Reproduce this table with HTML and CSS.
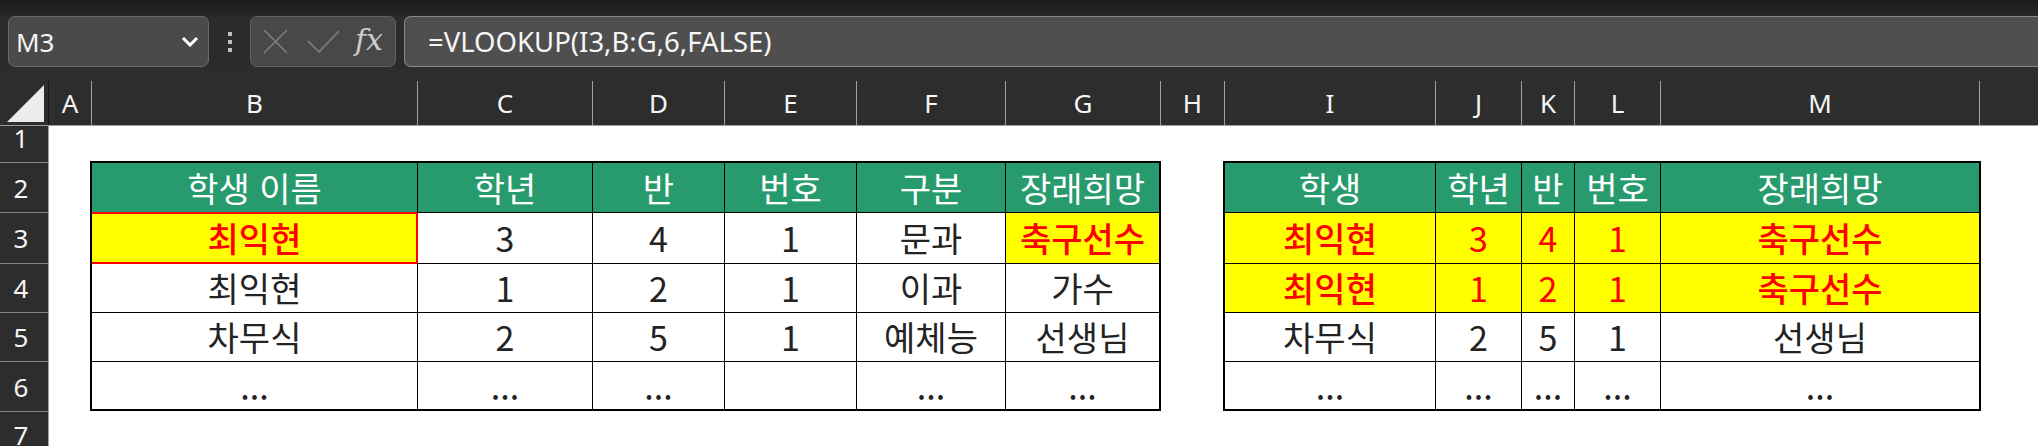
FILE: index.html
```html
<!DOCTYPE html>
<html lang="ko">
<head>
<meta charset="utf-8">
<title>VLOOKUP</title>
<link rel="stylesheet" href="styles.css">
</head>
<body>
<div class="app">
  <div class="topstrip"></div>
  <div class="fbar">
    <div class="namebox">
      <span class="ref">M3</span>
      <svg class="chev" width="18" height="11" viewBox="0 0 18 11"><path d="M2 2 L9 9 L16 2" fill="none" stroke="#ffffff" stroke-width="3"/></svg>
    </div>
    <div class="grip"><i></i><i></i><i></i></div>
    <div class="fxbox">
      <svg class="ico-x" width="25" height="25" viewBox="0 0 25 25"><path d="M1 1 L24 24 M24 1 L1 24" stroke="#7e7e7e" stroke-width="1.7" fill="none"/></svg>
      <svg class="ico-check" width="33" height="23" viewBox="0 0 33 23"><path d="M1 11 L12 22 L32 1" stroke="#7e7e7e" stroke-width="1.7" fill="none"/></svg>
      <span class="fx">fx</span>
    </div>
    <div class="formula">=VLOOKUP(I3,B:G,6,FALSE)</div>
  </div>
  <div class="colhead">
    <div class="corner"><svg width="38" height="38" viewBox="0 0 38 38"><path d="M0 37 L37 37 L37 0 Z" fill="#ececec"/></svg></div>
    <div class="col first">A</div>
    <div class="col">B</div>
    <div class="col">C</div>
    <div class="col">D</div>
    <div class="col">E</div>
    <div class="col">F</div>
    <div class="col">G</div>
    <div class="col">H</div>
    <div class="col">I</div>
    <div class="col">J</div>
    <div class="col">K</div>
    <div class="col">L</div>
    <div class="col">M</div>
    <div class="col"></div>
  </div>
  <div class="sheet">
    <div class="rowhead">
      <div class="rn r1">1</div>
      <div class="rn r2">2</div>
      <div class="rn r3">3</div>
      <div class="rn r4">4</div>
      <div class="rn r5">5</div>
      <div class="rn r6">6</div>
      <div class="rn r7">7</div>
    </div>
    <div class="cells">
      <div class="tbl t1">
        <div class="c h">학생 이름</div><div class="c h">학년</div><div class="c h">반</div><div class="c h">번호</div><div class="c h">구분</div><div class="c h">장래희망</div>
        <div class="c y k sel">최익현</div><div class="c">3</div><div class="c">4</div><div class="c">1</div><div class="c">문과</div><div class="c y k">축구선수</div>
        <div class="c">최익현</div><div class="c">1</div><div class="c">2</div><div class="c">1</div><div class="c">이과</div><div class="c">가수</div>
        <div class="c">차무식</div><div class="c">2</div><div class="c">5</div><div class="c">1</div><div class="c">예체능</div><div class="c">선생님</div>
        <div class="c">...</div><div class="c">...</div><div class="c">...</div><div class="c"></div><div class="c">...</div><div class="c">...</div>
      </div>
      <div class="tbl t2">
        <div class="c h">학생</div><div class="c h">학년</div><div class="c h">반</div><div class="c h">번호</div><div class="c h">장래희망</div>
        <div class="c y k">최익현</div><div class="c y">3</div><div class="c y">4</div><div class="c y">1</div><div class="c y k">축구선수</div>
        <div class="c y k">최익현</div><div class="c y">1</div><div class="c y">2</div><div class="c y">1</div><div class="c y k">축구선수</div>
        <div class="c">차무식</div><div class="c">2</div><div class="c">5</div><div class="c">1</div><div class="c">선생님</div>
        <div class="c">...</div><div class="c">...</div><div class="c">...</div><div class="c">...</div><div class="c">...</div>
      </div>
    </div>
  </div>
</div>
</body>
</html>
```

FILE: styles.css
```css
* { box-sizing: border-box; }
html, body { margin: 0; padding: 0; }
body {
  width: 2038px;
  height: 446px;
  overflow: hidden;
  background: #2d2d2d;
  font-family: "Noto Sans", "Noto Sans CJK KR", sans-serif;
}
.app { width: 2038px; height: 446px; display: flex; flex-direction: column; }

.topstrip {
  height: 16px;
  flex: none;
  background: linear-gradient(#1a1a1a, #282828);
}

.fbar {
  height: 51px;
  flex: none;
  display: flex;
  align-items: center;
  background: #2b2b2b;
}
.namebox {
  margin-left: 8px;
  width: 201px;
  height: 51px;
  border: 1px solid #6a6a6a;
  border-radius: 7px;
  background: #4a4a4a;
  display: flex;
  align-items: center;
  justify-content: space-between;
  padding: 0 9px 0 7px;
}
.ref { color: #f4f4f4; font-size: 26px; line-height: 1; }
.chev { display: block; }

.grip {
  margin-left: 19px;
  width: 4px;
  display: flex;
  flex-direction: column;
  gap: 4px;
}
.grip i { display: block; width: 4px; height: 4px; background: #bdbdbd; }

.fxbox {
  margin-left: 18px;
  width: 146px;
  height: 51px;
  border: 1px solid #626262;
  border-radius: 7px;
  background: #484848;
  display: flex;
  align-items: center;
  padding-left: 12px;
}
.ico-x { display: block; }
.ico-check { display: block; margin-left: 19px; }
.fx {
  margin-left: 15px;
  font-family: "DejaVu Serif", serif;
  font-style: italic;
  font-size: 30px;
  color: #cccccc;
  line-height: 1;
  margin-top: -4px;
}
.formula {
  margin-left: 8px;
  flex: 1;
  height: 51px;
  border: 1px solid #888888;
  border-right: 0;
  border-radius: 7px 0 0 7px;
  background: #4f4f4f;
  color: #f6f6f6;
  font-size: 27.5px;
  display: flex;
  align-items: center;
  padding-left: 23px;
  line-height: 1;
}

.colhead {
  height: 59px;
  flex: none;
  display: grid;
  grid-template-columns: 48px 43px 326px 175px 132px 132px 149px 155px 64px 211px 86px 53px 86px 319px 1fr;
  align-items: end;
  border-bottom: 1px solid #9d9d9d;
  background: #2d2d2d;
}
.corner {
  height: 44px;
  display: flex;
  align-items: flex-end;
  justify-content: flex-end;
  padding: 0 3px 2px 0;
}
.corner svg { display: block; }
.col {
  height: 44px;
  border-left: 1px solid #a0a0a0;
  color: #f6f6f6;
  font-size: 26px;
  line-height: 44px;
  text-align: center;
}
.col.first { border-left-color: #141414; }

.sheet { flex: 1; display: flex; min-height: 0; }
.rowhead {
  width: 49px;
  flex: none;
  border-right: 1px solid #a0a0a0;
  background: #2d2d2d;
  display: flex;
  flex-direction: column;
}
.rn {
  flex: none;
  border-bottom: 1px solid #858585;
  color: #f4f4f4;
  font-size: 26px;
  line-height: 1;
  display: flex;
  align-items: center;
  justify-content: center;
  padding-right: 6px;
}
.r1 { height: 37px; padding-bottom: 12px; }
.r2 { height: 50px; }
.r3 { height: 51px; }
.r4 { height: 49px; }
.r5 { height: 49px; }
.r6 { height: 50px; }
.r7 { flex: 1; border-bottom: 0; align-items: flex-start; padding-top: 10px; }

.cells {
  flex: 1;
  background: #ffffff;
  display: flex;
  align-items: flex-start;
  padding: 35px 0 0 41px;
  gap: 62px;
}
.tbl {
  display: grid;
  gap: 1px;
  background: #000;
  border: 2px solid #000;
  grid-template-rows: 49px 50px 48px 48px 47px;
}
.t1 { grid-template-columns: 325px 174px 131px 131px 148px 153px; }
.t2 { grid-template-columns: 210px 85px 52px 85px 318px; }

.c {
  background: #ffffff;
  color: #232323;
  font-family: "Noto Sans CJK KR", sans-serif;
  font-size: 34px;
  line-height: 1;
  display: flex;
  align-items: center;
  justify-content: center;
  white-space: nowrap;
}
.c.h { background: #289b6e; color: #ffffff; }
.c.y { background: #ffff00; color: #ff0000; }
.c.k { font-weight: 500; }
.c.sel {
  box-shadow: inset 0 1px 0 #ff0000, inset -1px 0 0 #ff0000, inset 0 -1px 0 #ff0000,
              0 -1px 0 #ff0000, 1px 0 0 #ff0000, 0 1px 0 #ff0000;
}
```
